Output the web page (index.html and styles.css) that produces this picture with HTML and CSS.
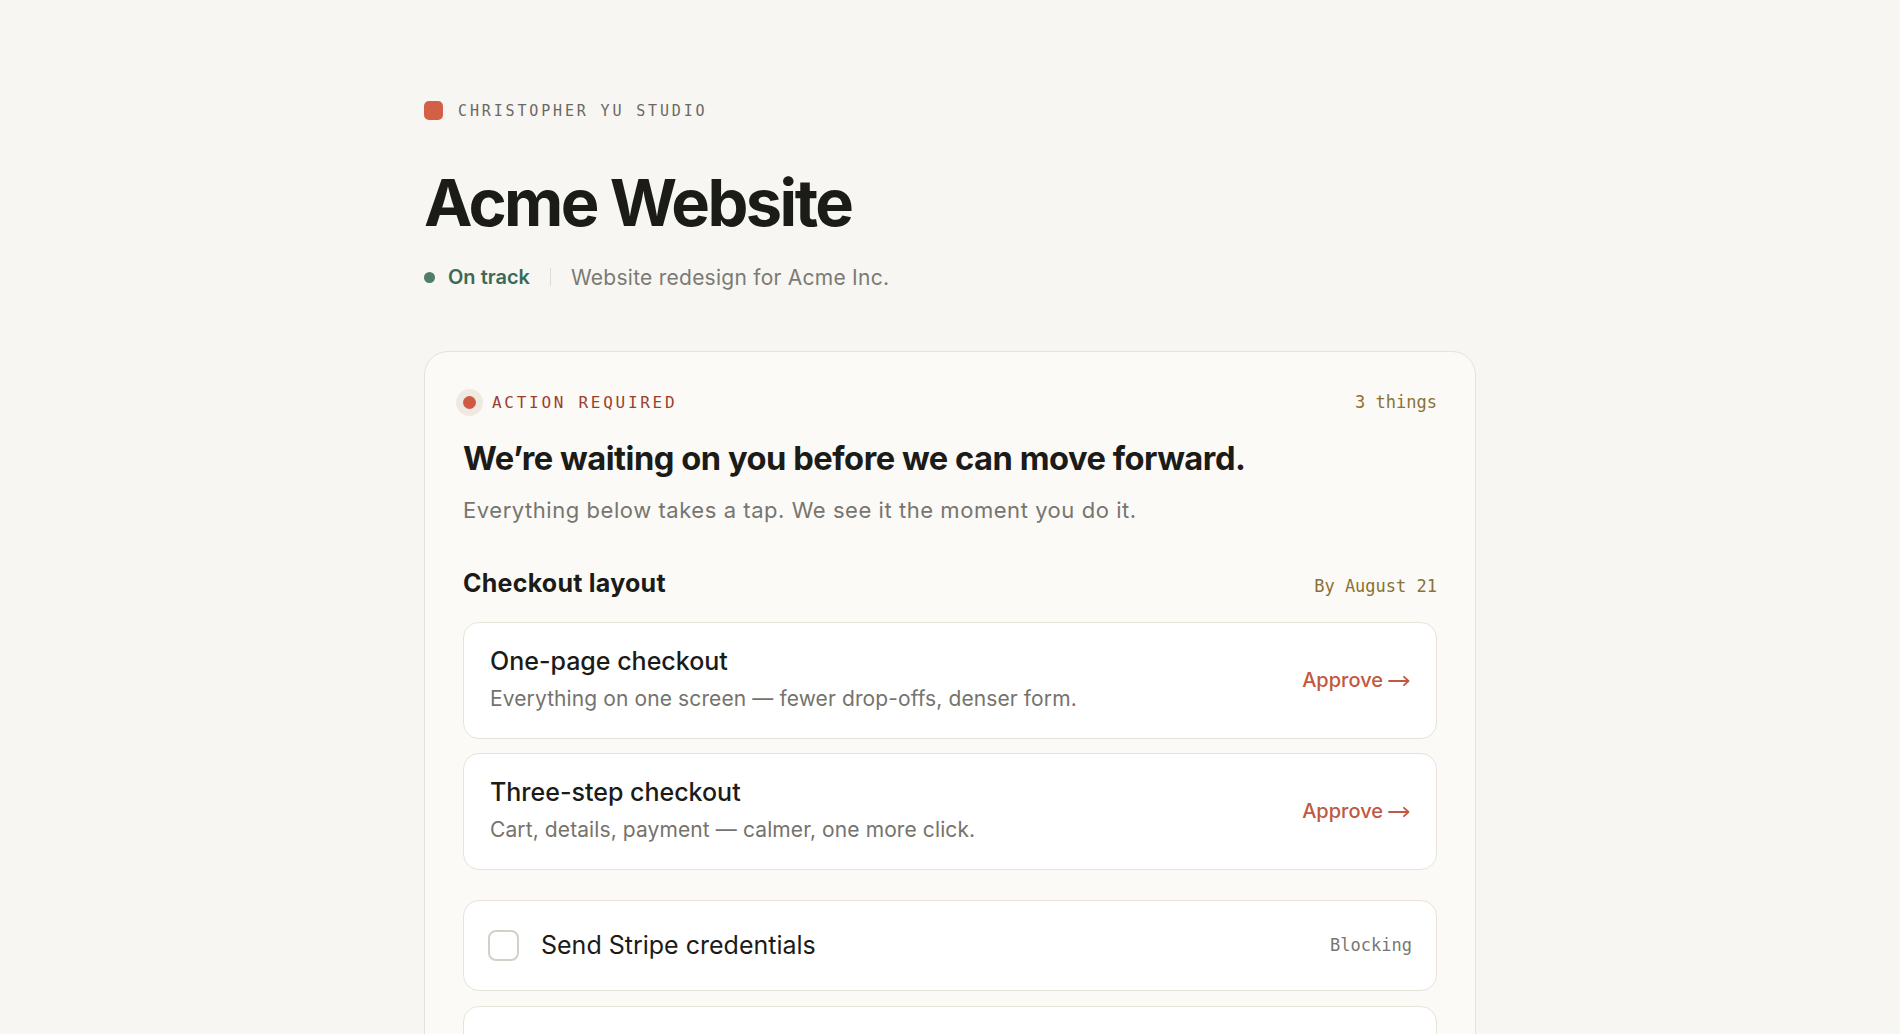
FILE: index.html
```html
<!DOCTYPE html>
<html lang="en">
<head>
<meta charset="utf-8">
<title>Acme Website — Christopher Yu Studio</title>
<link rel="stylesheet" href="styles.css">
</head>
<body>
<main class="page">
  <header class="brand">
    <span class="brand-mark"></span>
    <span class="brand-name">CHRISTOPHER YU STUDIO</span>
  </header>
  <h1 class="project-title">Acme Website</h1>
  <div class="status-row">
    <span class="status-dot"></span>
    <span class="status-text">On track</span>
    <span class="status-sep"></span>
    <span class="status-desc">Website redesign for Acme Inc.</span>
  </div>

  <section class="action-card">
    <div class="action-head">
      <div class="action-label">
        <span class="action-dot"></span>
        <span class="action-label-text">ACTION REQUIRED</span>
      </div>
      <span class="meta">3 things</span>
    </div>
    <h2 class="action-title">We’re waiting on you before we can move forward.</h2>
    <p class="action-sub">Everything below takes a tap. We see it the moment you do it.</p>

    <div class="group-head">
      <h3 class="group-title">Checkout layout</h3>
      <span class="meta">By August 21</span>
    </div>
    <div class="options">
      <div class="option">
        <div class="option-body">
          <div class="option-title">One-page checkout</div>
          <div class="option-desc">Everything on one screen — fewer drop-offs, denser form.</div>
        </div>
        <span class="approve">Approve<svg class="arrow" viewBox="0 0 22 12" width="22" height="12" aria-hidden="true"><path d="M1 6H20.5M16 1.8L20.5 6L16 10.2" fill="none" stroke="currentColor" stroke-width="1.8" stroke-linecap="round" stroke-linejoin="round"/></svg></span>
      </div>
      <div class="option">
        <div class="option-body">
          <div class="option-title">Three-step checkout</div>
          <div class="option-desc">Cart, details, payment — calmer, one more click.</div>
        </div>
        <span class="approve">Approve<svg class="arrow" viewBox="0 0 22 12" width="22" height="12" aria-hidden="true"><path d="M1 6H20.5M16 1.8L20.5 6L16 10.2" fill="none" stroke="currentColor" stroke-width="1.8" stroke-linecap="round" stroke-linejoin="round"/></svg></span>
      </div>
    </div>

    <div class="tasks">
      <div class="task">
        <span class="checkbox"></span>
        <span class="task-title">Send Stripe credentials</span>
        <span class="task-tag">Blocking</span>
      </div>
      <div class="task">
        <span class="checkbox"></span>
        <span class="task-title"></span>
        <span class="task-tag"></span>
      </div>
    </div>
  </section>
</main>
</body>
</html>
```
FILE: styles.css
```css
* { box-sizing: border-box; }
html, body { margin: 0; padding: 0; }
body {
  background: #f7f6f2;
  color: #1b1b18;
  font-family: Inter, "Noto Sans", "Liberation Sans", sans-serif;
}
.page {
  width: 1052px;
  margin: 0 auto;
  padding-top: 101px;
}
.brand {
  display: flex;
  align-items: center;
  gap: 15px;
  height: 19px;
}
.brand-mark {
  width: 19px;
  height: 19px;
  border-radius: 5px;
  background: #d35f47;
}
.brand-name {
  font-family: "DejaVu Sans Mono", "Liberation Mono", monospace;
  font-size: 15px;
  letter-spacing: 0.19em;
  color: #6a6863;
}
.project-title {
  margin: 43px 0 0 0;
  font-size: 65px;
  line-height: 80px;
  font-weight: 700;
  letter-spacing: -0.04em;
  color: #1b1b18;
}
.status-row {
  display: flex;
  align-items: center;
  margin-top: 19px;
  height: 30px;
}
.status-dot {
  width: 11px;
  height: 11px;
  border-radius: 50%;
  background: #4f7d66;
  margin-right: 13px;
}
.status-text {
  font-size: 20px;
  font-weight: 600;
  color: #3d6a54;
}
.status-sep {
  width: 1px;
  height: 18px;
  background: #dedbd4;
  margin: 0 20px;
}
.status-desc {
  font-size: 21px;
  letter-spacing: 0.012em;
  color: #7c7a74;
}
.action-card {
  margin-top: 59px;
  background: #fbfaf7;
  border: 1px solid #e6e2da;
  border-radius: 24px;
  padding: 37px 38px 40px;
}
.action-head {
  display: flex;
  align-items: center;
  justify-content: space-between;
  height: 26px;
}
.action-label {
  display: flex;
  align-items: center;
  gap: 16px;
}
.action-dot {
  width: 13px;
  height: 13px;
  border-radius: 50%;
  background: #cf5a42;
  box-shadow: 0 0 0 7px #f0e9e1;
}
.action-label-text {
  font-family: "DejaVu Sans Mono", "Liberation Mono", monospace;
  font-size: 16px;
  letter-spacing: 0.17em;
  color: #9b3f2d;
}
.meta {
  font-family: "DejaVu Sans Mono", "Liberation Mono", monospace;
  font-size: 17px;
  color: #8a7134;
}
.action-title {
  margin: 23px 0 0 0;
  font-size: 32.7px;
  line-height: 40px;
  font-weight: 700;
  letter-spacing: -0.015em;
  color: #1b1b18;
}
.action-sub {
  margin: 17px 0 0 0;
  font-size: 22px;
  line-height: 31px;
  letter-spacing: 0.025em;
  color: #77756f;
}
.group-head {
  display: flex;
  align-items: baseline;
  justify-content: space-between;
  margin-top: 42px;
}
.group-title {
  margin: 0;
  font-size: 25px;
  line-height: 31px;
  font-weight: 700;
  letter-spacing: 0.01em;
  color: #1b1b18;
}
.options {
  display: flex;
  flex-direction: column;
  gap: 14px;
  margin-top: 23px;
}
.option {
  display: flex;
  align-items: center;
  justify-content: space-between;
  background: #ffffff;
  border: 1px solid #e7e3d8;
  border-radius: 16px;
  padding: 22px 26px 23px;
}
.option-body {
  display: flex;
  flex-direction: column;
  gap: 6px;
}
.option-title {
  font-size: 25px;
  line-height: 32px;
  font-weight: 500;
  color: #1b1b18;
}
.option-desc {
  font-size: 21px;
  line-height: 32px;
  letter-spacing: 0.005em;
  color: #75736d;
}
.approve {
  display: flex;
  align-items: center;
  gap: 5px;
  font-size: 20px;
  font-weight: 500;
  color: #c1583f;
}
.arrow {
  display: block;
  margin-top: 1px;
}
.tasks {
  display: flex;
  flex-direction: column;
  gap: 15px;
  margin-top: 30px;
}
.task {
  display: flex;
  align-items: center;
  gap: 22px;
  background: #ffffff;
  border: 1px solid #e7e3d8;
  border-radius: 16px;
  padding: 28px 24px 29px;
}
.checkbox {
  width: 31px;
  height: 31px;
  border: 2px solid #d3d0ca;
  border-radius: 8px;
  flex: none;
}
.task-title {
  flex: 1;
  font-size: 25px;
  line-height: 32px;
  min-height: 32px;
  color: #1b1b18;
}
.task-tag {
  font-family: "DejaVu Sans Mono", "Liberation Mono", monospace;
  font-size: 17px;
  color: #787672;
}
```
